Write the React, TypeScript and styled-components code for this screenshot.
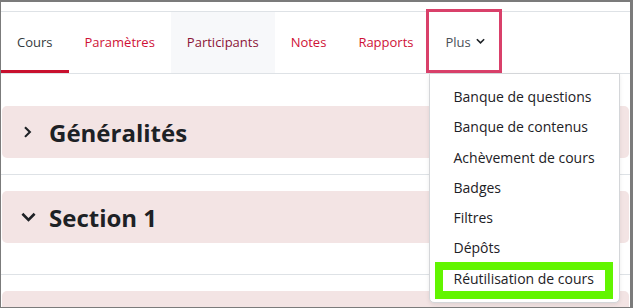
import styled, { createGlobalStyle } from "styled-components";

const GlobalStyle = createGlobalStyle`
  body {
    margin: 0;
    background: #ffffff;
    font-family: "Open Sans", "Noto Sans", sans-serif;
  }
`;

const tabs = [
  { label: "Cours", state: "active" },
  { label: "Paramètres", state: "link" },
  { label: "Participants", state: "hover" },
  { label: "Notes", state: "link" },
  { label: "Rapports", state: "link" },
];

const menuItems = [
  "Banque de questions",
  "Banque de contenus",
  "Achèvement de cours",
  "Badges",
  "Filtres",
  "Dépôts",
  "Réutilisation de cours",
];

const ChevronDown = ({ size }: { size: number }) => (
  <svg width={size} height={size} viewBox="0 0 16 16" fill="none">
    <path d="M2.5 5 L8 10.5 L13.5 5" stroke="#1d2125" strokeWidth="2.8" strokeLinecap="square" />
  </svg>
);

const ChevronRight = ({ size }: { size: number }) => (
  <svg width={size} height={size} viewBox="0 0 16 16" fill="none">
    <path d="M5 2.5 L10.5 8 L5 13.5" stroke="#1d2125" strokeWidth="2.8" strokeLinecap="square" />
  </svg>
);

const App = () => {
  return (
    <>
      <GlobalStyle />
      <Frame>
        <TabBar>
          {tabs.map((t) => (
            <Tab key={t.label} $state={t.state}>
              {t.label}
            </Tab>
          ))}
          <MoreTab>
            <Tab $state="plain">
              Plus
              <ChevronDown size={9} />
            </Tab>
            <Callout />
            <Dropdown>
              {menuItems.map((item, i) => (
                <MenuItem key={item}>
                  {item}
                  {i === menuItems.length - 1 && <Highlight />}
                </MenuItem>
              ))}
            </Dropdown>
          </MoreTab>
        </TabBar>
        <Content>
          <Section $spacing={16}>
            <SectionHeader>
              <Toggle>
                <ChevronRight size={12} />
              </Toggle>
              <SectionTitle>Généralités</SectionTitle>
            </SectionHeader>
          </Section>
          <Section $spacing={31}>
            <SectionHeader>
              <Toggle>
                <ChevronDown size={15} />
              </Toggle>
              <SectionTitle>Section 1</SectionTitle>
            </SectionHeader>
          </Section>
          <Section $spacing={16}>
            <SectionHeader />
          </Section>
        </Content>
      </Frame>
    </>
  );
};

const Frame = styled.div`
  box-sizing: border-box;
  width: 633px;
  height: 308px;
  overflow: hidden;
  border-style: solid;
  border-color: #7b7b7b;
  border-width: 2px 3px 1px 1px;
  background: #ffffff;
`;

const TabBar = styled.nav`
  display: flex;
  margin-top: 9px;
  height: 61px;
  border-top: 1px solid #dee2e6;
  border-bottom: 1px solid #dee2e6;
`;

const tabColors: Record<string, string> = {
  active: "#343a40",
  link: "#cf1237",
  hover: "#8b1538",
  plain: "#4a5057",
};

const Tab = styled.div<{ $state: string }>`
  display: flex;
  align-items: center;
  gap: 5px;
  box-sizing: border-box;
  height: 100%;
  padding: 0 16px;
  font-size: 13px;
  color: ${({ $state }) => tabColors[$state]};
  background: ${({ $state }) => ($state === "hover" ? "#f7f8fa" : "transparent")};
  border-bottom: 3px solid ${({ $state }) => ($state === "active" ? "#c8102e" : "transparent")};
  border-top: 1px solid transparent;
  white-space: nowrap;
`;

const MoreTab = styled.div`
  position: relative;
  height: 100%;
`;

const Callout = styled.div`
  position: absolute;
  left: -4px;
  top: -3px;
  width: 76px;
  height: 64px;
  box-sizing: border-box;
  border: 3px solid #d9406a;
  pointer-events: none;
`;

const Dropdown = styled.ul`
  position: absolute;
  left: -1px;
  top: 61px;
  width: 191px;
  box-sizing: border-box;
  margin: 0;
  padding: 8px 0;
  list-style: none;
  background: #ffffff;
  border: 1px solid #d4d6d9;
  border-radius: 0 0 5px 5px;
  box-shadow: 0 2px 4px rgba(0, 0, 0, 0.08);
`;

const MenuItem = styled.li`
  position: relative;
  height: 30.3px;
  line-height: 30px;
  padding-left: 24px;
  font-size: 14px;
  color: #1d2125;
  white-space: nowrap;
`;

const Highlight = styled.span`
  position: absolute;
  left: 5px;
  top: -2px;
  width: 178px;
  height: 37px;
  box-sizing: border-box;
  border: 8px solid #62f500;
`;

const Content = styled.main`
  padding-top: 32px;
`;

const Section = styled.section<{ $spacing: number }>`
  padding-bottom: ${({ $spacing }) => $spacing}px;
  border-bottom: 1px solid #dee2e6;
  margin-bottom: 16px;
`;

const SectionHeader = styled.div`
  display: flex;
  align-items: center;
  height: 52px;
  margin: 0 1px 0 1px;
  border-radius: 5px;
  background: #f3e4e4;
`;

const Toggle = styled.span`
  display: flex;
  justify-content: center;
  width: 16px;
  margin: 0 13px 0 18px;
`;

const SectionTitle = styled.h3`
  margin: 0;
  font-size: 24px;
  font-weight: 700;
  color: #1d2125;
`;

export default App;
